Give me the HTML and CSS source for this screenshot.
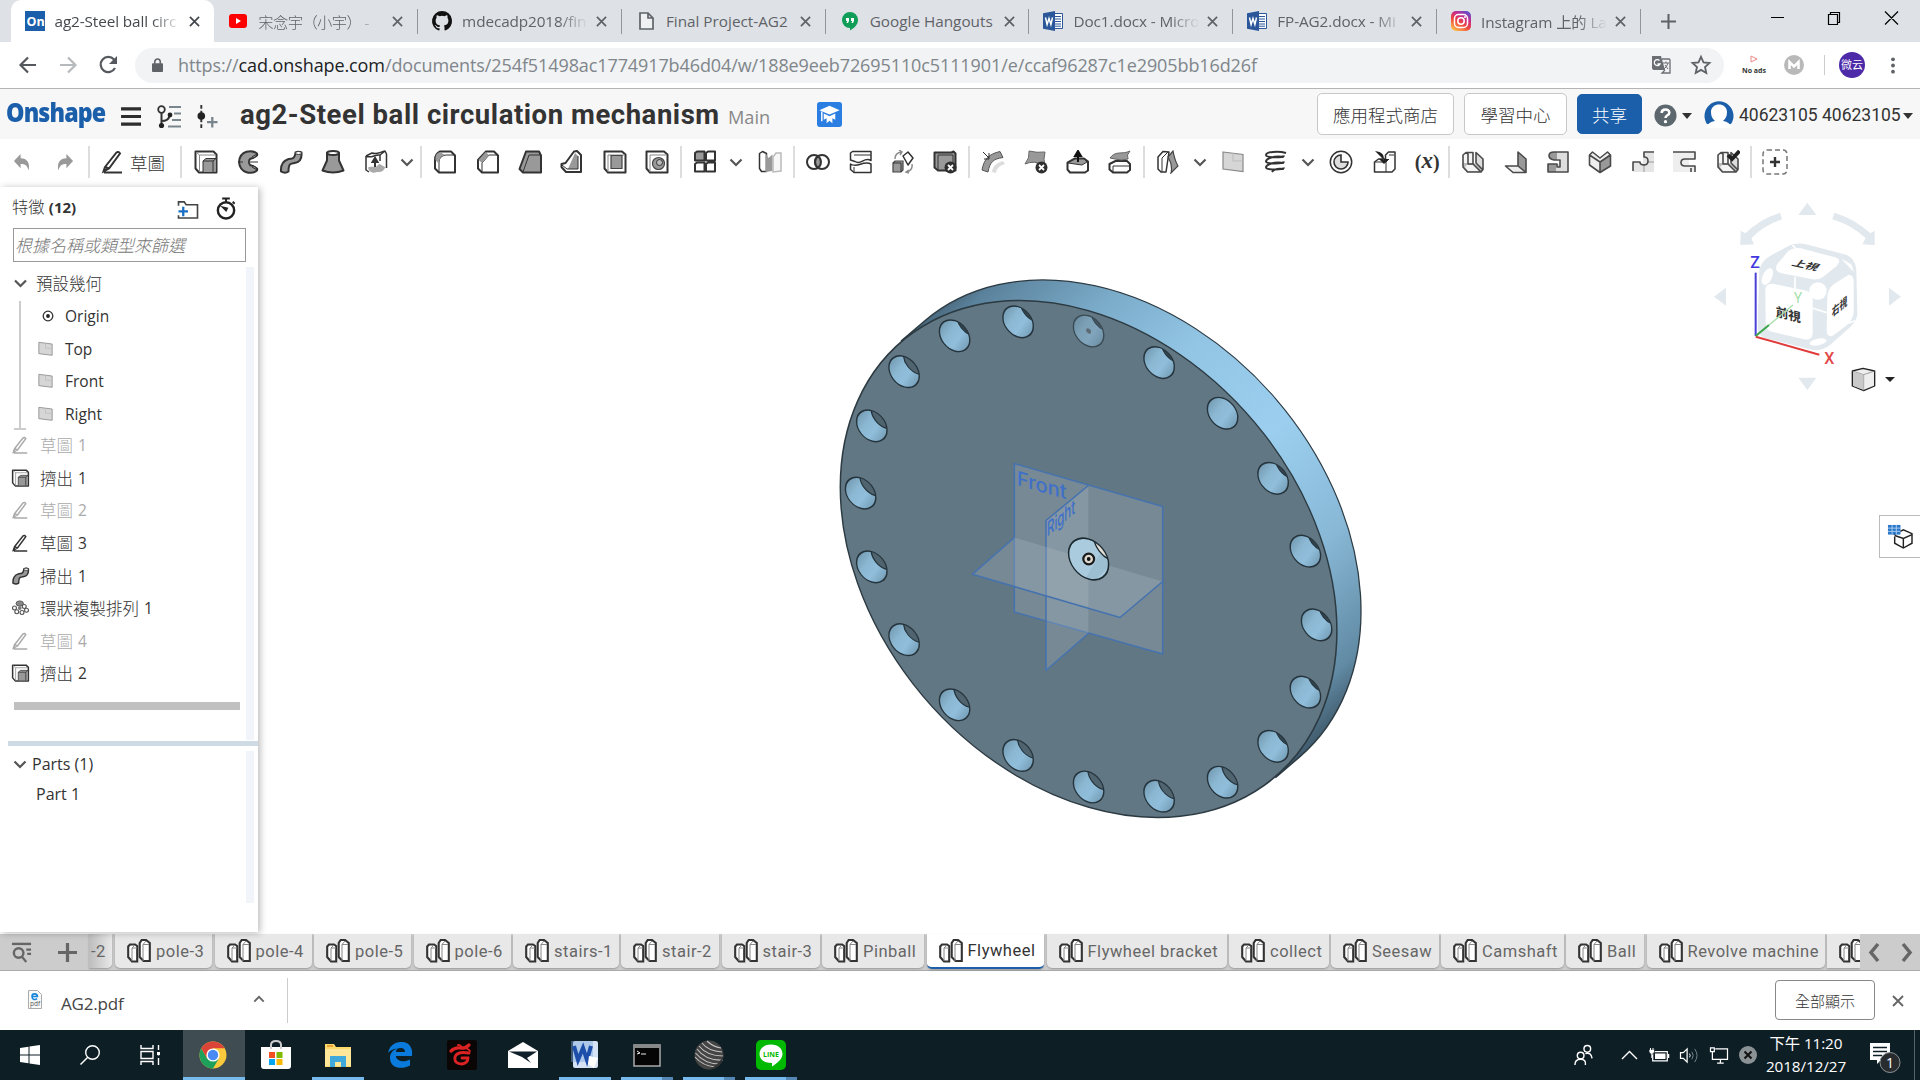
FILE: index.html
```html
<!DOCTYPE html>
<html lang="zh-Hant">
<head>
<meta charset="utf-8">
<title>ag2-Steel ball circulation mechanism</title>
<link rel="stylesheet" href="styles.css">
</head>
<body>
<svg class="defs" aria-hidden="true">
  <defs>
    <symbol id="x" viewBox="0 0 12 12"><path d="M1 1l10 10M11 1L1 11" fill="none" stroke="currentColor" stroke-width="1.900"/></symbol>
    <symbol id="chev" viewBox="0 0 14 9"><path d="M1.500 1.500L7 7l5.500-5.500" fill="none" stroke="currentColor" stroke-width="2.200"/></symbol>
    <symbol id="caret" viewBox="0 0 10 6"><path d="M0 0h10L5 6z" fill="currentColor"/></symbol>
    <symbol id="word" viewBox="0 0 20 20"><path d="M10 2.500h9.500v15H10z" fill="#fff" stroke="#2b579a"/><path d="M12 5.500h6M12 8h6M12 10.500h6M12 13h6M12 15.200h6" stroke="#2b579a"/><path d="M0 2.200L12 0v20L0 17.800z" fill="#2b579a"/><path d="M2.500 6.500l1.600 7 1.900-6 1.900 6 1.600-7" fill="none" stroke="#fff" stroke-width="1.500"/></symbol>
    <symbol id="undo" viewBox="0 0 20 20"><path d="M8 1v4.500c7 0 10 5 8.500 13C15 13 13 11.500 8 11.500V16L1 8.500z" fill="#999"/></symbol>
    <symbol id="pencil" viewBox="0 0 24 24"><path d="M4 17L15.500 2.500q2-1.500 3.500 1L8 18.500 2.500 21.500zM4 17l4 1.500M3 22.500h18" fill="none" stroke="currentColor" stroke-width="2"/></symbol>
    <symbol id="extrude" viewBox="0 0 24 24"><path d="M1.500 1.500h18l3 3v18H5l-3.500-4z" class="wf"/><path d="M5.500 5h16.500M5.500 5v17M2 2l3.500 3" class="thin lt"/><path d="M9 11l3-2.500h10v13H9z" fill="#999"/><path d="M9 22V11h10v11M9 11l3-2.500h10M19 11l3-2.500" class="thin"/></symbol>
    <symbol id="revolve" viewBox="0 0 24 24"><path d="M20 3.500C15-.5 3 0 2 12c1 12 13 12.500 18 8.500q1-3-3-5-5 1-5-3.500t5-3.500q4-2 3-5z" class="gf"/><path d="M12 12l9-6v4zM12 12l9 6v-4z" fill="#fff"/><path d="M20 4l-5 3M20 20l-5-3M2 12h4M12 12h9" class="thin"/></symbol>
    <symbol id="sweep" viewBox="0 0 24 24"><path d="M16.500 2.500q3-1.500 6 0c.5 6-2 10-7 10.500-4 .4-6 .6-6 8.500-2 1.500-5 1.500-7.500 0C1.500 14 5 10.500 9 9.200c5-.7 7-.7 7.500-6.700z" class="gf"/><ellipse cx="19.500" cy="3" rx="3" ry="1.500" fill="#fff" stroke="#333"/></symbol>
    <symbol id="loft" viewBox="0 0 24 24"><path d="M6 3v7.500L1.500 20.500q10.500 4 21 0L18 10.500V3z" class="gf"/><ellipse cx="12" cy="3" rx="6" ry="2" class="wf"/></symbol>
    <symbol id="thicken" viewBox="0 0 24 24"><path d="M3 18c6-3 8 1 11-3 3-3 6 0 8 1-3 7-6 6-9 6-4 2-7 0-10-4z" fill="#aaa"/><path d="M2 6l6-3c5 2 8-1 13-2l1.500 3v14M2 6v14l3 2M2 6c5 3 9-2 14-1v6M16 5l5-4" class="wf1"/><path d="M11 17v-6M8.500 12l2.500-4 2.500 4z" stroke="#333" fill="#333" stroke-width="2"/></symbol>
    <symbol id="fillet" viewBox="0 0 24 24"><path d="M7 1.500h11l4 4v17H6L2 18.500V10q0-6 5-8.500z" class="wf"/><path d="M6 22V12q0-6 7-7h9" class="thin"/><path d="M2.500 10Q2 3 7 2l5 3q-6 1-6 7v2z" fill="#9a9a9a"/></symbol>
    <symbol id="chamfer" viewBox="0 0 24 24"><path d="M10 1.500h8l4 4v17H6L2 18.500V10z" class="wf"/><path d="M6 22V13l7-8h9" class="thin"/><path d="M2.500 10l7-8 3.500 3-7 8z" fill="#9a9a9a"/></symbol>
    <symbol id="draft" viewBox="0 0 24 24"><path d="M8 1.500h13l2 4v17H5L1.500 19z" class="gf"/><path d="M11 5h12M11 5L5 22" class="thin"/></symbol>
    <symbol id="rib" viewBox="0 0 24 24"><path d="M14 1.500l3-.5 4 4v17H6L1.500 17v-3l4-1z" class="wf"/><path d="M15 3l3 3v13H8z" fill="#999"/><path d="M2 15l5 4h11V6" class="thin"/></symbol>
    <symbol id="shell" viewBox="0 0 24 24"><path d="M1.500 1.500H19l3.500 3v18H5l-3.500-4z" class="wf"/><path d="M5 5h17M5 5v17" class="thin lt"/><path d="M8 5.500h11v13H8z" class="gf1"/></symbol>
    <symbol id="hole" viewBox="0 0 24 24"><path d="M1.500 1.500H19l3.500 3v18H5l-3.500-4z" class="wf"/><path d="M5 5h17M5 5v17" class="thin lt"/><circle cx="13.500" cy="13.500" r="6" class="gf1"/><circle cx="14.500" cy="12.500" r="3" fill="#bbb" stroke="#333"/></symbol>
    <symbol id="pattern" viewBox="0 0 24 24"><path d="M2 3l2-1.500h7.500v9H2z" class="gf"/><path d="M13 3l2-1.500h7v9h-9zM2 14l2-1.500h7.500v9H2zM13 14l2-1.500h7v9h-9z" class="wf"/></symbol>
    <symbol id="mirror" viewBox="0 0 24 24"><path d="M1.500 3.500l3-2 4 2v18H3.500l-2-3z" class="wf1"/><path d="M7.500 3l3 5 4-3.500V21l-7 1z" fill="#999"/><path d="M15 22V7l3-4h5v18z" fill="#f7f7f7" stroke="#bbb" stroke-width="1.500"/></symbol>
    <symbol id="bool" viewBox="0 0 24 24"><circle cx="8" cy="12" r="7" class="wf"/><circle cx="16" cy="12" r="7" class="wf"/><path d="M12 6.300a7 7 0 010 11.400 7 7 0 010-11.400z" class="gf"/></symbol>
    <symbol id="split" viewBox="0 0 24 24"><path d="M1.500 10V3l2-1.500H22v9c-7-4-10 5-16 1z" class="wf1"/><path d="M1.500 14c7 5 12-4 20.500 0v8.500H5l-3.500-3z" class="wf1"/><path d="M5 5h17M5 17v5" class="thin"/></symbol>
    <symbol id="transform" viewBox="0 0 24 24"><path d="M2 13l2-2h8v9l-2 2H2z" class="gf1"/><path d="M2 13h8v9" class="thin"/><path d="M12 6l5-4 5 6-5 7z" class="wf1"/><path d="M4 9Q4 3 10 2M8 0l3 2-2 3M21 14q1 6-5 8M18 20l-3 2 3 1" fill="none" stroke="#888" stroke-width="1.400"/></symbol>
    <symbol id="badx" viewBox="0 0 24 24"><circle cx="17.500" cy="17.500" r="6" fill="#2e2e2e"/><path d="M15 15l5 5m0-5l-5 5" stroke="#fff" stroke-width="1.800"/></symbol>
    <symbol id="del" viewBox="0 0 24 24"><path d="M1.500 2.500h17l2-1 2 2v17H5l-3.500-3z" class="gf"/><path d="M5 5h15V21M5 5v15" class="thin"/><use href="#badx"/></symbol>
    <symbol id="modf" viewBox="0 0 24 24"><path d="M1 20C3 9 8 4 19 1.500l3 6C12 9 9 12 7 22z" fill="#999" stroke="#555"/><path d="M11 22c1-7 5-9 11-11l2 3c-6 2-8 4-9 9z" fill="#ddd"/><path d="M2 2l6 6M8 3v6H3" class="thin"/></symbol>
    <symbol id="delf" viewBox="0 0 24 24"><path d="M1 14Q6 8 5 1q8 2 16 1-2 8 0 13Q10 10 1 14z" fill="#999" stroke="#666"/><use href="#badx"/></symbol>
    <symbol id="movef" viewBox="0 0 24 24"><path d="M1.500 12.500l7-4H18l4 3v9l-3 2H4l-2.500-3z" class="wf"/><path d="M2 13l7-4h9l3 3-5 3z" fill="#999" stroke="#333"/><path d="M12 12V3M9 6l3-5 3 5z" stroke="#111" stroke-width="2"/></symbol>
    <symbol id="replf" viewBox="0 0 24 24"><path d="M1.500 14l6-3H19l3 3v6l-3 2.500H5l-3.500-3z" class="wf"/><path d="M5 16h17M5 16v6" class="thin"/><path d="M2 8C8 0 14 5 22 1q-4 4-2 8-7 2-13 0z" fill="#999" stroke="#666"/></symbol>
    <symbol id="offset" viewBox="0 0 24 24"><path d="M2 7l5-5.500 6 .5-3 20H5l-3-3z" class="wf1"/><path d="M6 8l6-6M6 8v14" class="thin"/><path d="M12 7l5-6q2 10 5 15l-7 7q2-8-3-16z" class="gf1"/></symbol>
    <symbol id="plane" viewBox="0 0 24 24"><path d="M2 2l20 2.500v17L2 19z" fill="#d6d6d6" stroke="#888" stroke-width="1.200"/><path d="M12 3v8h10" fill="none" stroke="#bbb"/></symbol>
    <symbol id="helix" viewBox="0 0 24 24"><path d="M22 3C14 .5 2 2 2 5s18 3 18 .5M20 7C10 5 2 9 2 11.500s18 3 18 0M20 13c-10-2-18 2-18 4.500s18 3 18 0M20 19c-6-1-10 0-12 3" fill="none" stroke="#333" stroke-width="2"/></symbol>
    <symbol id="curve" viewBox="0 0 24 24"><circle cx="12" cy="12" r="10.700" class="wf1"/><path d="M12 5v7h7a7 7 0 11-7-7z" fill="#ddd" stroke="#333" stroke-width="1.600"/></symbol>
    <symbol id="derive" viewBox="0 0 24 24"><path d="M1.500 12l4-3h7V5l3-3H22v17l-3 3H1.500z" class="wf1"/><path d="M2 12h11v10M13 12l3-3M16 5h5" class="thin"/><path d="M2 1c7 1 9 3 9 9M6 9l5 5 5-5z" fill="#222"/></symbol>
    <symbol id="sm1" viewBox="0 0 24 24"><path d="M2 5l3-2.500h7V14l8 8H6l-4-5z" fill="#f4f4f4"/><path d="M2 13h11l9 6-2 3H6l-4-5z" fill="#bbb"/><path d="M6 15h7l6 6H7l-3-4z" fill="#f4f4f4"/><path d="M15 2.500l7 6.500V20l-7-7z" fill="#ddd"/><path d="M12 14H7V4L5 2.500 2 5v12l4.500 5H20l2-2.500V9l-7-6.500V13l7 7M5 2.500h7V14l8 8" class="smo"/></symbol>
    <symbol id="sm2" viewBox="0 0 24 24"><path d="M1.500 16H14l8 6.500H9z" fill="#eee"/><path d="M14 2l8 7v13.500L14 16z" fill="#999"/><path d="M14 2l8 7v13.500H9L1.500 16H14zM14 16l8 6.500" class="smo"/></symbol>
    <symbol id="sm3" viewBox="0 0 24 24"><path d="M8 2h14v20H2v-8h12V9H8Q3 9 3 5.500T8 2z" fill="#ddd"/><path d="M16 2H8Q3 2 3 6t5 4h3V2zM2 14h8v8H2z" fill="#999"/><path d="M22 2H8Q3 2 3 5.500T8 10h6v7h-3v-3H2v8h20z" class="smo"/></symbol>
    <symbol id="sm4" viewBox="0 0 24 24"><path d="M1.500 5l3-3L12 8l7.500-6 3 3v12L12 22.500 1.500 15z" fill="#eee"/><path d="M12 12l10-8v12l-10 7z" fill="#999"/><path d="M12 22.500V12L1.500 5v10zM12 12L22.500 5v11L12 22.500M1.500 5l3-3L12 8l7.500-6 3 3" class="smo"/></symbol>
    <symbol id="sm5" viewBox="0 0 24 24"><path d="M12 3h11v19H2v-9h10z" fill="#e5e5e5"/><path d="M13 14v8M17 12h6" stroke="#999"/><path d="M23 2H13v5q4 0 4 4t-4 4-4-3H2v9" class="smo"/></symbol>
    <symbol id="sm6" viewBox="0 0 24 24"><path d="M0 2h22v6h-6v8h5v6H0z" fill="#eee"/><path d="M0 2h22v7H12q-4 0-4 3.500t4 3.500h10v6M18 22v-4" class="smo"/></symbol>
    <symbol id="sm7" viewBox="0 0 24 24"><use href="#sm1"/><path d="M12 5l4 4 7.500-8" fill="none" stroke="#222" stroke-width="3.800"/></symbol>
    <symbol id="plus" viewBox="0 0 26 26"><rect x="1" y="1" width="24" height="24" rx="4" fill="none" stroke="#777" stroke-width="1.500" stroke-dasharray="5 3"/><path d="M13 8v10M8 13h10" stroke="#333" stroke-width="2.400"/></symbol>
    <symbol id="circ" viewBox="0 0 24 24"><ellipse cx="11" cy="6" rx="5" ry="3.500" fill="#888" stroke="#444"/><g fill="#fff" stroke="#555" stroke-width="1.500"><circle cx="4" cy="12" r="2.600"/><circle cx="17" cy="10" r="2.600"/><circle cx="20" cy="15" r="2.600"/><circle cx="7" cy="17" r="2.600"/><circle cx="14" cy="18" r="2.600"/></g><circle cx="11" cy="12" r="2.500" fill="#777"/></symbol>
    <symbol id="part" viewBox="0 0 24 24"><path d="M1.200 7.500L3 5.500h5L10.200 7v15.500H5L1.200 18z" class="pf"/><path d="M5 9l3-3M5 9h5M5 9v13" class="thin lt"/><path d="M12.700 4l2-3H19l3.800 3v18h-6.300l-3.800-4z" class="pf"/><path d="M16 5.500L19 2M16 5.500h6M16 5.500V22" class="thin lt"/></symbol>
    <linearGradient id="rim" gradientUnits="userSpaceOnUse" x1="-187" y1="-178" x2="200" y2="152"><stop offset="0" stop-color="#415b6c"/><stop offset=".05" stop-color="#5b829c"/><stop offset=".2" stop-color="#7bacca"/><stop offset=".35" stop-color="#92c4e4"/><stop offset=".55" stop-color="#9ccfef"/><stop offset=".75" stop-color="#88b8d6"/><stop offset=".93" stop-color="#618aa4"/><stop offset="1" stop-color="#3f596a"/></linearGradient>
    <linearGradient id="bore" x1="0" y1=".2" x2="1" y2=".8"><stop offset="0" stop-color="#7095ac"/><stop offset=".35" stop-color="#8bb7d2"/><stop offset=".62" stop-color="#90bedb"/><stop offset="1" stop-color="#7299b1"/></linearGradient>
    <clipPath id="bc"><circle r="15"/></clipPath>
    <clipPath id="cc"><circle r="20"/></clipPath>
    <g id="h0"><circle r="15.200" fill="url(#bore)" stroke="#25343c" stroke-width="1.400"/></g>
    <g id="ha"><circle r="15.200" fill="url(#bore)"/><g clip-path="url(#bc)"><circle cx="17.500" cy="-20.500" r="15.200" fill="#34444e" stroke="#25343c" stroke-width="1.300"/></g><circle r="15.200" fill="none" stroke="#25343c" stroke-width="1.400"/></g>
    <g id="hb"><circle r="15.200" fill="url(#bore)"/><g clip-path="url(#bc)"><circle cx="14.500" cy="-17" r="15.200" fill="#50646f" stroke="#25343c" stroke-width="1.300"/></g><circle r="15.200" fill="none" stroke="#25343c" stroke-width="1.400"/></g>
  </defs>
</svg>

<header class="tabs">
  <div class="tab on"><svg class="fav" viewBox="0 0 20 20"><path fill="#1b5faa" d="M0 0h20v20H0z"/><text x="1.500" y="14.500" class="onfav">On</text></svg><span>ag2-Steel ball circ</span><svg class="tx"><use href="#x"/></svg></div>
  <div class="tab"><svg class="fav" viewBox="0 0 20 20"><rect x="1" y="3" width="18" height="14" rx="3" fill="#f00"/><path d="M8 7l5 3-5 3z" fill="#fff"/></svg><span class="zh">宋念宇（小宇） -</span><svg class="tx"><use href="#x"/></svg></div>
  <div class="tab"><svg class="fav" viewBox="0 0 16 16"><path fill="#111" d="M8 0a8 8 0 00-2.530 15.590c.4.070.55-.17.55-.38v-1.490c-2.230.48-2.700-.94-2.700-.94-.36-.92-.89-1.170-.89-1.170-.73-.5.060-.49.060-.49.800.06 1.230.83 1.230.83.720 1.220 1.870.87 2.330.66.070-.52.280-.87.510-1.070-1.780-.2-3.640-.89-3.640-3.950 0-.87.310-1.590.82-2.150-.08-.2-.36-1.020.08-2.120 0 0 .67-.21 2.200.82a7.600 7.600 0 014 0c1.530-1.040 2.200-.82 2.200-.82.440 1.100.16 1.920.08 2.120.51.560.82 1.270.82 2.150 0 3.070-1.870 3.750-3.650 3.950.29.250.54.730.54 1.480v2.190c0 .21.150.46.550.38A8 8 0 008 0z"/></svg><span>mdecadp2018/fin</span><svg class="tx"><use href="#x"/></svg></div>
  <div class="tab"><svg class="fav" viewBox="0 0 20 20"><path d="M4 2h8l5 5v11H4zM12 2v5h5" fill="#eef0f2" stroke="#5f6368" stroke-width="1.700"/></svg><span class="full">Final Project-AG2</span><svg class="tx"><use href="#x"/></svg></div>
  <div class="tab"><svg class="fav" viewBox="0 0 20 20"><path d="M10 1a8 8 0 018 8c0 5-4 8-8 10.500V17a8 8 0 010-16z" fill="#0f9d58"/><path d="M6 7h3v3l-1 2H6.500l.7-2H6zM11 7h3v3l-1 2h-1.500l.7-2H11z" fill="#fff"/></svg><span class="full">Google Hangouts</span><svg class="tx"><use href="#x"/></svg></div>
  <div class="tab"><svg class="fav"><use href="#word"/></svg><span>Doc1.docx - Micro</span><svg class="tx"><use href="#x"/></svg></div>
  <div class="tab"><svg class="fav"><use href="#word"/></svg><span>FP-AG2.docx - Mi</span><svg class="tx"><use href="#x"/></svg></div>
  <div class="tab"><svg class="fav" viewBox="0 0 20 20"><linearGradient id="ig" x1=".2" y1="1" x2=".8" y2="0"><stop offset="0" stop-color="#fdc04d"/><stop offset=".4" stop-color="#f0453c"/><stop offset=".7" stop-color="#c72d8d"/><stop offset="1" stop-color="#5b4fcf"/></linearGradient><rect width="20" height="20" rx="5" fill="url(#ig)"/><rect x="3.500" y="3.500" width="13" height="13" rx="4" fill="none" stroke="#fff" stroke-width="1.500"/><circle cx="10" cy="10" r="3.200" fill="none" stroke="#fff" stroke-width="1.500"/><circle cx="14" cy="6" r="1" fill="#fff"/></svg><span>Instagram 上的 La</span><svg class="tx"><use href="#x"/></svg></div>
  <svg class="newtab" viewBox="0 0 16 16"><path d="M8 0v16M0 8h16" stroke="#5f6368" stroke-width="2.200"/></svg>
  <svg class="win" viewBox="0 0 130 16"><path d="M0 7.500h13M57.500 4.500h9v10h-9zM59.500 4.500v-2h9v10h-2M114 1.500l13 13M127 1.500l-13 13" fill="none" stroke="#000" stroke-width="1.200"/></svg>
</header>

<div class="addr">
  <svg class="nav" viewBox="0 0 100 20"><g fill="none" stroke-width="2.200"><path d="M17 10H2M9 2.500L1.500 10 9 17.500" stroke="#55595e"/><path d="M41 10h15M49 2.500l7.500 7.500-7.500 7.500" stroke="#b7babd"/><path d="M96 13a7.600 7.600 0 11-1-8.500" stroke="#55595e"/></g><path d="M98 1v8h-8z" fill="#55595e"/></svg>
  <div class="omni"><svg class="lock" viewBox="0 0 12 15"><path d="M1 5.500h10a1 1 0 011 1V14a1 1 0 01-1 1H1a1 1 0 01-1-1V6.500a1 1 0 011-1z" fill="#5f6368"/><path d="M3 6V4a3 3 0 016 0v2" fill="none" stroke="#5f6368" stroke-width="1.700"/></svg><p class="url">https://<b>cad.onshape.com</b>/documents/254f51498ac1774917b46d04/w/188e9eeb72695110c5111901/e/ccaf96287c1e2905bb16d26f</p>
    <svg class="tr" viewBox="0 0 20 20"><path d="M1 1h9l4 14H3a2 2 0 01-2-2z" fill="#6b6f73"/><path d="M11 4h7a1 1 0 011 1v13H11l3-3" fill="none" stroke="#6b6f73" stroke-width="1.300"/><path d="M8.500 5.500A3 3 0 109 9H6.500" fill="none" stroke="#fff" stroke-width="1.300"/><path d="M12 8h6M15 6.500V8M17 8q-1 4-4 6M14 10l3 4" fill="none" stroke="#6b6f73"/></svg>
    <svg class="star" viewBox="0 0 20 20"><path d="M10 1.800l2.500 5.600 6 .6-4.500 4 1.300 6L10 14.900 4.700 18 6 12 1.500 8l6-.6z" fill="none" stroke="#5f6368" stroke-width="1.800"/></svg>
  </div>
  <div class="noads"><svg viewBox="0 0 8 8"><path d="M1 1l6 3-6 3z" fill="none" stroke="#e88"/></svg>No ads</div>
  <svg class="mm" viewBox="0 0 20 20"><circle cx="10" cy="10" r="10" fill="#b9b9b9"/><path d="M5.500 14V7l4.500 4.500L14.500 7v7" fill="none" stroke="#fff" stroke-width="2.500"/></svg>
  <i class="bar"></i><span class="ava">微云</span>
  <svg class="dots" viewBox="0 0 4 18"><g fill="#5f6368"><circle cx="2" cy="2.500" r="2"/><circle cx="2" cy="9" r="2"/><circle cx="2" cy="15.500" r="2"/></g></svg>
</div>

<div class="head">
  <strong class="logo">Onshape</strong>
  <svg class="burger" viewBox="0 0 22 20"><path d="M0 2h21M0 10h21M0 18h21" stroke="#2d2d2d" stroke-width="3.400"/></svg>
  <svg class="branch" viewBox="0 0 26 24"><circle cx="5.500" cy="4.500" r="3.300" fill="none" stroke="#333" stroke-width="1.800"/><path d="M5.500 8v13M5.500 16q7 0 8-5" fill="none" stroke="#333" stroke-width="2"/><circle cx="14" cy="10" r="2.400" fill="#222"/><circle cx="5.500" cy="20.500" r="2.600" fill="#222"/><path d="M13 2h12M18 8.500h7M16 15h9M12 21.500h13" stroke="#7a868e" stroke-width="2.200"/></svg>
  <svg class="ins" viewBox="0 0 22 24"><path d="M4.500 0v4M4.500 6v3M4.500 14v4M4.500 20v4" stroke="#333" stroke-width="2"/><circle cx="4.500" cy="11.500" r="4" fill="#222"/><path d="M16 12.500v11M10.500 18h11" stroke="#7a868e" stroke-width="2.400"/></svg>
  <h1>ag2-Steel ball circulation mechanism</h1><span class="main">Main</span>
  <svg class="cap" viewBox="0 0 26 26"><rect width="26" height="26" rx="3" fill="#2a7de1"/><path d="M13 4l10.500 4.500L13 13 2.500 8.500z" fill="#fff"/><path d="M7 12l6 2.700 6-2.700v6.500L16 17v5l-3-2.500-3 2.500v-5l-3 1.500z" fill="#fff"/><path d="M5 10v10" stroke="#fff" stroke-width="1.500"/></svg>
  <div class="right">
    <button class="b1">應用程式商店</button><button class="b2">學習中心</button><button class="b3">共享</button>
    <svg class="help" viewBox="0 0 24 24"><circle cx="12" cy="12" r="11.500" fill="#5c676e"/><path d="M8 9.500c0-5 8-5 8-.5 0 3-4 2.500-4 5.500" fill="none" stroke="#fff" stroke-width="2.700"/><circle cx="12" cy="18.500" r="1.700" fill="#fff"/></svg><svg class="car c1"><use href="#caret"/></svg>
    <svg class="user" viewBox="0 0 30 30"><path d="M3 24A14.500 14.500 0 1127 24" fill="#1b5faa"/><path d="M2 28q2-6 9-7-4-3-4-9c0-10 16-10 16 0q0 6-4 9 7 1 9 7z" fill="#fff"/></svg>
    <span class="uid">40623105 40623105</span><svg class="car"><use href="#caret"/></svg>
  </div>
</div>

<nav class="tools">
  <div class="grp"><i><svg class="s20"><use href="#undo"/></svg></i><i><svg class="s20 flip"><use href="#undo"/></svg></i></div>
  <div class="grp sk"><svg class="pen"><use href="#pencil"/></svg>草圖</div>
  <div class="grp"><i><svg><use href="#extrude"/></svg></i><i><svg><use href="#revolve"/></svg></i><i><svg><use href="#sweep"/></svg></i><i><svg><use href="#loft"/></svg></i><i><svg><use href="#thicken"/></svg></i><u><svg><use href="#chev"/></svg></u></div>
  <div class="grp"><i><svg><use href="#fillet"/></svg></i><i><svg><use href="#chamfer"/></svg></i><i><svg><use href="#draft"/></svg></i><i><svg><use href="#rib"/></svg></i><i><svg><use href="#shell"/></svg></i><i><svg><use href="#hole"/></svg></i></div>
  <div class="grp"><i><svg><use href="#pattern"/></svg></i><u><svg><use href="#chev"/></svg></u><i><svg><use href="#mirror"/></svg></i></div>
  <div class="grp"><i><svg><use href="#bool"/></svg></i><i><svg><use href="#split"/></svg></i><i><svg><use href="#transform"/></svg></i><i><svg><use href="#del"/></svg></i></div>
  <div class="grp"><i><svg><use href="#modf"/></svg></i><i><svg><use href="#delf"/></svg></i><i><svg><use href="#movef"/></svg></i><i><svg><use href="#replf"/></svg></i></div>
  <div class="grp"><i><svg><use href="#offset"/></svg></i><u><svg><use href="#chev"/></svg></u><i><svg><use href="#plane"/></svg></i><i><svg><use href="#helix"/></svg></i><u><svg><use href="#chev"/></svg></u><i><svg><use href="#curve"/></svg></i><i><svg><use href="#derive"/></svg></i><i class="vx">(<em>x</em>)</i></div>
  <div class="grp"><i><svg><use href="#sm1"/></svg></i><i><svg><use href="#sm2"/></svg></i><i><svg><use href="#sm3"/></svg></i><i><svg><use href="#sm4"/></svg></i><i><svg><use href="#sm5"/></svg></i><i><svg><use href="#sm6"/></svg></i><i><svg><use href="#sm7"/></svg></i></div>
  <div class="grp"><i><svg class="s26"><use href="#plus"/></svg></i></div>
</nav>

<main class="work">
  <aside class="panel">
    <div class="feat">
      <div class="ph"><span>特徵 <b>(12)</b></span>
        <svg class="fold" viewBox="0 0 24 20"><path d="M2 6V2h6l2 3h12v14H2v-3" fill="none" stroke="#444" stroke-width="1.700"/><path d="M7 7v10M2 12h10" stroke="#1b6fc2" stroke-width="2.400"/></svg>
        <svg class="watch" viewBox="0 0 22 24"><circle cx="11" cy="14" r="8.500" fill="none" stroke="#222" stroke-width="2.500"/><path d="M7 1.500h8M11 2v4M18 5l2 2M11 14l-3-3 4 1z" stroke="#222" stroke-width="2"/></svg></div>
      <div class="search">根據名稱或類型來篩選</div>
      <div class="list">
        <div class="row top"><svg class="ch"><use href="#chev"/></svg><span>預設幾何</span></div>
        <div class="sub">
          <div class="row"><svg class="org" viewBox="0 0 12 12"><circle cx="6" cy="6" r="4.800" fill="none" stroke="#333" stroke-width="1.300"/><circle cx="6" cy="6" r="1.900" fill="#222"/></svg>Origin</div>
          <div class="row"><svg><use href="#plane"/></svg>Top</div>
          <div class="row"><svg><use href="#plane"/></svg>Front</div>
          <div class="row"><svg><use href="#plane"/></svg>Right</div>
        </div>
        <div class="row off"><svg><use href="#pencil"/></svg><span>草圖</span>1</div>
        <div class="row"><svg><use href="#extrude"/></svg><span>擠出</span>1</div>
        <div class="row off"><svg><use href="#pencil"/></svg><span>草圖</span>2</div>
        <div class="row"><svg><use href="#pencil"/></svg><span>草圖</span>3</div>
        <div class="row"><svg><use href="#sweep"/></svg><span>掃出</span>1</div>
        <div class="row"><svg><use href="#circ"/></svg><span>環狀複製排列</span>1</div>
        <div class="row off"><svg><use href="#pencil"/></svg><span>草圖</span>4</div>
        <div class="row"><svg><use href="#extrude"/></svg><span>擠出</span>2</div>
        <div class="roll"></div>
      </div>
    </div>
    <div class="splitter"></div>
    <div class="parts"><div class="row pr"><svg class="ch"><use href="#chev"/></svg>Parts (1)</div><div class="pt">Part 1</div></div>
  </aside>
  <section class="stage">
    <svg class="scene" viewBox="258 187 1662 747">
      <g transform="matrix(1 .289 0 1 1088.600 559)">
        <path d="M-187.200-164.100L-163.700-190.900A248.700 248.700 0 01210.700 137.300L187.200 164.100z" fill="url(#rim)" stroke="#2c3a42" stroke-width="1.300"/>
        <circle r="248.300" fill="#627784" stroke="#2c3a42" stroke-width="1.500"/>
        <g opacity=".65"><use href="#ha" x="0" y="-228"/></g><circle cy="-228" r="2.500" fill="#5d6b74"/>
        <use href="#ha" x="70.500" y="-216.800"/><use href="#h0" x="134" y="-184.500"/><use href="#ha" x="184.500" y="-134"/><use href="#ha" x="216.800" y="-70.500"/><use href="#ha" x="228" y="0"/><use href="#ha" x="216.800" y="70.500"/><use href="#ha" x="184.500" y="134"/><use href="#hb" x="134" y="184.500"/><use href="#hb" x="70.500" y="216.800"/><use href="#hb" x="0" y="228"/><use href="#hb" x="-70.500" y="216.800"/><use href="#hb" x="-134" y="184.500"/><use href="#hb" x="-184.500" y="134"/><use href="#hb" x="-216.800" y="70.500"/><use href="#hb" x="-228" y="0"/><use href="#hb" x="-216.800" y="-70.500"/><use href="#hb" x="-184.500" y="-134"/><use href="#ha" x="-134" y="-184.500"/><use href="#ha" x="-70.500" y="-216.800"/>
      </g>
      <g fill="#b8c6cc" fill-opacity=".24" stroke="#4673ae" stroke-width="1.600" stroke-linejoin="round">
        <path d="M1014.300 463.500L1162.700 506.500V654L1014.300 612z"/>
        <path d="M1088.400 485.500L1046 520.500V670.500L1088.400 633.500z" stroke="none"/><path d="M1088.400 485.500L1046 520.500V670.500L1088.400 633.500" fill="none"/>
        <path d="M1014.300 537.500L972.300 574.300L1120 617.500L1162.700 581.500z" stroke="none"/><path d="M1014.300 537.500L972.300 574.300L1120 617.500L1162.700 581.500" fill="none"/>
      </g>
      <text class="pl" transform="matrix(1 .289 0 1 1017 485)">Front</text>
      <text class="pl" transform="matrix(.57 -.49 0 1 1047 537)">Right</text>
      <g transform="matrix(1 .289 0 1 1088.600 559)"><circle r="20" fill="#aacbdd"/><path d="M14-14L-3 20 8 18 20 2z" fill="#9dbfd2"/><g clip-path="url(#cc)"><circle cx="25" cy="-25" r="20" fill="#e3ded6" stroke="#1b2930" stroke-width="1.500"/></g><circle r="20" fill="none" stroke="#1b2930" stroke-width="1.500"/></g>
      <circle cx="1088.700" cy="559" r="5.400" fill="#ddd8cf" stroke="#191919" stroke-width="2.200"/><circle cx="1088.700" cy="559" r="1.900" fill="#111"/>

      <g transform="translate(1680 180) scale(.33333)">
        <g fill="#e1e8ee"><path d="M382 68l27 37h-54zM382 630l27-37h-54zM102 350l36-27v54zM663 350l-36-27v54z"/>
          <path d="M300 98l6 20q-55 18-92 57l8 18-41 2 1-43 14 8q42-42 104-62zM463 98l-6 20q60 18 100 57l-10 18 37 2V152l-13 8q-44-42-108-62z"/>
          <path d="M238 268Q246 242 270 228L325 198Q345 188 375 192L490 222Q525 230 529 270L532 400Q531 420 515 437L450 495Q425 515 395 509L255 474Q232 466 233 440z"/></g>
        <g fill="#fff"><path d="M325 213Q340 202 362 205L465 232Q488 240 470 258L430 290Q418 300 398 298L305 280Q280 272 292 252z"/><path d="M256 330Q257 308 282 312L380 332Q398 337 398 357V458Q397 483 372 478L275 455Q257 450 257 430z"/><path d="M442 350Q444 326 462 312L505 285Q522 282 521 310V400Q518 420 502 434L462 465Q441 477 440 450z"/><circle cx="414" cy="333" r="26"/><ellipse cx="262" cy="290" rx="14" ry="27" transform="rotate(25 262 290)"/><ellipse cx="414" cy="486" rx="26" ry="10" transform="rotate(-12 414 486)"/><path d="M482 235l40 42-8-24zM335 196l12 15 4-3-10-14z"/></g>
        <path d="M345 290v38M396 384l44 14M505 430l20-8" stroke="#fff" stroke-width="5"/>
        <g class="face"><text transform="matrix(1 .22 -.5 .62 333 256)">上視</text><text transform="matrix(1 .25 0 1 287 408)">前視</text><text transform="matrix(.62 -.5 0 .95 455 412)">右視</text></g>
        <path d="M227 468V278" stroke="#4a40d8" stroke-width="6"/><path d="M227 470l191 54" stroke="#e03a3a" stroke-width="6"/><path d="M227 468l40-33" stroke="#3aa64a" stroke-width="6"/><path d="M267 435l72-60" stroke="#a5dfa9" stroke-width="4"/>
        <g class="ax"><text x="211" y="264" fill="#4338e0">Z</text><text x="433" y="552" fill="#e24848">X</text><text x="341" y="368" fill="#a5dfa9" class="ay">Y</text></g>
        <g stroke="#222" stroke-width="4" stroke-linejoin="round"><path d="M517 573l32-8 35 8v45l-33 14-34-14z" fill="#eee"/><path d="M517 573l34 11 33-11M551 584v48" fill="none" stroke-width="2" stroke="#777"/></g><path d="M519 575l31 10v44l-31-12z" fill="#c9c9c9"/><path d="M615 591h30l-15 15z" fill="#222"/>
      </g>
    </svg>
    <button class="side"><svg viewBox="0 0 26 26"><path d="M7 11l10-5 9 4v10l-9 5-9-5V13" fill="#fff" stroke="#222" stroke-width="1.500"/><path d="M8 12l9 3 9-4M17 15v10" fill="none" stroke="#222" stroke-width="1.500"/><path d="M1 1h13v10H1z" fill="#2a77c9"/><path d="M1 4.300h13M1 7.700h13M5.300 1v10M9.700 1v10" stroke="#a9cdf0"/></svg></button>
  </section>
</main>

<div class="dtabs">
  <div class="lead"><svg class="find" viewBox="0 0 22 22"><path d="M1 2h20" stroke="#666" stroke-width="2.500"/><circle cx="8" cy="11.500" r="5" fill="none" stroke="#666" stroke-width="2.500"/><path d="M11.500 15.500L16 21M16 8h5M17 12.500h4" stroke="#666" stroke-width="2.300"/></svg><svg class="add" viewBox="0 0 20 20"><path d="M10 0v20M0 10h20" stroke="#666" stroke-width="3.400"/></svg></div>
  <div class="dt t0">-2</div>
  <div class="dt"><svg><use href="#part"/></svg>pole-3</div>
  <div class="dt"><svg><use href="#part"/></svg>pole-4</div>
  <div class="dt"><svg><use href="#part"/></svg>pole-5</div>
  <div class="dt"><svg><use href="#part"/></svg>pole-6</div>
  <div class="dt w106"><svg><use href="#part"/></svg>stairs-1</div>
  <div class="dt w98"><svg><use href="#part"/></svg>stair-2</div>
  <div class="dt w98"><svg><use href="#part"/></svg>stair-3</div>
  <div class="dt w102"><svg><use href="#part"/></svg>Pinball</div>
  <div class="dt w118 cur"><svg><use href="#part"/></svg>Flywheel</div>
  <div class="dt w180"><svg><use href="#part"/></svg>Flywheel bracket</div>
  <div class="dt w100"><svg><use href="#part"/></svg>collect</div>
  <div class="dt w108"><svg><use href="#part"/></svg>Seesaw</div>
  <div class="dt w122"><svg><use href="#part"/></svg>Camshaft</div>
  <div class="dt w78"><svg><use href="#part"/></svg>Ball</div>
  <div class="dt w178"><svg><use href="#part"/></svg>Revolve machine</div>
  <div class="dt last"><svg><use href="#part"/></svg></div>
  <div class="tail"><svg viewBox="0 0 60 36"><path d="M18 10l-7 8.500 7 8.500M43 10l7 8.500-7 8.500" fill="none" stroke="#666" stroke-width="3.500"/></svg></div>
</div>

<div class="dl">
  <svg class="pdf" viewBox="0 0 14 19"><path d="M.5.500h9l4 4v14H.500z" fill="#fafafa" stroke="#aaa"/><path d="M4 6.500h5.500C9 3 4 3 4 6.500s3.500 3.500 5 2.200" fill="none" stroke="#1a86d9" stroke-width="1.600"/><text x="2" y="15.500" class="pt4">pdf</text></svg>
  <span>AG2.pdf</span><svg class="up"><use href="#chev"/></svg><i></i>
  <button>全部顯示</button><svg class="cl"><use href="#x"/></svg>
</div>

<footer class="task">
  <div class="ti w60"><svg viewBox="0 0 20 20"><path d="M0 3l8.500-1.200V9.500H0zM9.500 1.600L20 0v9.500H9.500zM0 10.500h8.500v7.700L0 17zM9.500 10.500H20V20L9.500 18.400z" fill="#fff"/></svg></div>
  <div class="ti w60"><svg viewBox="0 0 20 20"><circle cx="12.500" cy="7.500" r="6.800" fill="none" stroke="#fff" stroke-width="1.400"/><path d="M7.500 12.500L.500 19.500" stroke="#fff" stroke-width="1.400"/></svg></div>
  <div class="ti w64"><svg viewBox="0 0 20 20"><path d="M1 0v3.500h12V0M1 20v-3.500h12V20M1 6.500h12v7H1zM18.500 0v5M18.500 7v3.500M18.500 13v7" fill="none" stroke="#fff" stroke-width="1.400"/><path d="M17 7h3v3h-3z" fill="#fff"/></svg></div>
  <div class="ti act"><svg class="s28" viewBox="0 0 28 28"><circle cx="14" cy="14" r="13.500" fill="#fbc93c"/><path d="M2.310 7.250A13.500 13.500 0 0014 27.500L19.850 17.380 8.150 17.380z" fill="#1da05a"/><path d="M2.310 7.250A13.500 13.500 0 0125.690 7.250H14L8.150 17.380z" fill="#db4437"/><circle cx="14" cy="14" r="6.600" fill="#fff"/><circle cx="14" cy="14" r="5.200" fill="#4a8af4"/></svg></div>
  <div class="ti"><svg class="s30" viewBox="0 0 30 30"><path d="M0 7h30v19q0 3-3 3H3q-3 0-3-3z" fill="#fff"/><path d="M10 9V5q0-4 5-4t5 4v4" fill="none" stroke="#ccc" stroke-width="2"/><path d="M8 12h6v6H8z" fill="#f25022"/><path d="M15.500 12h6v6h-6z" fill="#7fba00"/><path d="M8 19h6v6H8z" fill="#00a4ef"/><path d="M15.500 19h6v6h-6z" fill="#ffb900"/></svg></div>
  <div class="ti run"><svg class="s28" viewBox="0 0 28 28"><path d="M1 3h9l2 3h15v20H1z" fill="#ffd96a"/><path d="M1 8h26v17H1z" fill="#ffe79a"/><path d="M3 4h6v2H3z" fill="#e8a33d"/><path d="M6 15h16v11h-5v-5h-6v5H6z" fill="#3fa9dc"/></svg></div>
  <div class="ti"><svg class="s28" viewBox="0 0 28 28"><path d="M2 12C4 2 12 1 16 1c8 0 11 7 10 14H10c0 5 8 7 14 3.500v6C15 29 4 27 4 17c0-5 3-8 7-9.500Q5 8 2 12zM10 11h9q0-4-4.500-4T10 11z" fill="#0a7bdc"/></svg></div>
  <div class="ti"><svg class="s30" viewBox="0 0 30 30"><rect width="30" height="30" rx="2" fill="#0a0606"/><g fill="none" stroke="#dc2222" stroke-linecap="round"><path d="M4 11q4-4 9-3t9-3" stroke-width="3.200"/><path d="M11 5q3 0 4 3 5-1 8 3" stroke-width="1.800"/><path d="M22 13q-12-2-14 4-1 7 7 7 6-1 6-6h-6" stroke-width="2.800"/></g></svg></div>
  <div class="ti"><svg class="s30" viewBox="0 0 30 30"><path d="M0 11L15 2l15 9v17H0z" fill="#fff"/><path d="M1 11.500h28L19 18l4 5-9-6z" fill="#10202a"/></svg></div>
  <div class="ti run"><svg class="s28" viewBox="0 0 28 28"><rect x="2" y="0" width="25" height="27" rx="2" fill="#d6e3f5"/><path d="M0 0h22v21H0z" fill="#7ea6dc" opacity=".45"/><path d="M3 5l4 14 5-12 4 12 4-14" fill="none" stroke="#1d4faa" stroke-width="4"/><path d="M18 15l9 2-4 10-6-4z" fill="#fff"/></svg></div>
  <div class="ti run two"><svg class="s28" viewBox="0 0 28 28"><path d="M1 4h26v21H1z" fill="#050505" stroke="#aaa" stroke-width="1.500"/><path d="M1 4h26v3H1z" fill="#888"/><path d="M4 10l3 2-3 1M8 13h5" fill="none" stroke="#eee"/></svg></div>
  <div class="ti run two"><svg class="s30" viewBox="0 0 30 30"><circle cx="15" cy="15" r="14.500" fill="#444"/><g fill="none" stroke="#c4c4c4" stroke-width="1.100"><path d="M8 3q6 8 20 9M5 6q8 10 24 10M3 9q9 12 26 11M1.500 13q9 11 24 11M1 17q8 9 20 10M13 1q6 6 14 7"/></g><path d="M15 29.500A14.500 14.500 0 0029.500 15Q26 24 15 29.500z" fill="#333"/></svg></div>
  <div class="ti run two"><svg class="s30" viewBox="0 0 30 30"><rect width="30" height="30" rx="5" fill="#00b900"/><path d="M15 4.500c7 0 11.500 4 11.500 9.500 0 5-5 9-10.500 12.500v-3.500C8 23 3.500 19.500 3.500 14S8 4.500 15 4.500z" fill="#fff"/><text x="7" y="16.500" class="ln">LINE</text></svg></div>
  <div class="tray">
    <svg class="ppl" viewBox="0 0 20 22"><g fill="none" stroke="#fff" stroke-width="1.500"><circle cx="7" cy="11" r="3.500"/><path d="M1 21q0-6 6-6t5 6"/><circle cx="14" cy="4" r="3.500"/><path d="M12 9q6-2 7 5"/></g></svg>
    <svg class="tup" viewBox="0 0 17 10"><path d="M1 1l7.500 7.500L16 1" fill="none" stroke="#fff" stroke-width="1.400"/></svg>
    <svg class="bat" viewBox="0 0 20 14"><path d="M3.700 3.700H18.300v9.100H3.700z" fill="none" stroke="#fff" stroke-width="1.200"/><path d="M6 5.500h10.500V11H6z" fill="#fff"/><path d="M19.500 6v4" stroke="#fff" stroke-width="1.500"/><path d="M0 1.500h5.500V4L4 6H1.500L0 4z" fill="#fff" stroke="#0e1e25" stroke-width=".7"/><path d="M1.500 0v2M4 0v2M2.800 5v5" stroke="#fff"/></svg>
    <svg class="vol" viewBox="0 0 20 18"><path d="M1 6h3l4-4v14l-4-4H1z" fill="none" stroke="#fff" stroke-width="1.300"/><path d="M10.500 7q1.500 2 0 4" fill="none" stroke="#fff"/><path d="M13 5q3 4 0 8M16 2q5 7 0 14" fill="none" stroke="#788"/></svg>
    <svg class="mon" viewBox="0 0 20 18"><path d="M6 2h13v11H3V8M8 17h7M11.500 13v4M1 1h4v4H1zM3 5v3" fill="none" stroke="#fff" stroke-width="1.300"/></svg>
    <svg class="xc" viewBox="0 0 18 18"><circle cx="9" cy="9" r="9" fill="#8b9296"/><path d="M5.500 5.500l7 7M12.500 5.500l-7 7" stroke="#111" stroke-width="2"/></svg>
    <div class="clock"><span>下午 11:20</span><span>2018/12/27</span></div>
    <svg class="note" viewBox="0 0 32 32"><path d="M1 1h20v17h-9l-4 4v-4H1z" fill="#fff"/><path d="M4 5.500h14M4 9.500h14M4 13.500h9" stroke="#0e1e25" stroke-width="1.500"/><circle cx="21" cy="20.500" r="10" fill="#282c2f" stroke="#8b9296"/><text x="17" y="26" class="nb">1</text></svg>
    <i></i>
  </div>
</footer>
</body>
</html>
```
FILE: styles.css
```css
* { box-sizing: border-box; }
body { margin: 0; width: 1920px; height: 1080px; overflow: hidden; background: #fff; color: #333; display: flex; flex-direction: column; font: 15px "Open Sans", "Noto Sans CJK TC", sans-serif; }
svg { display: block; flex: none; overflow: visible; }
i, em { font-style: normal; }
p, h1 { margin: 0; }
button { font: inherit; padding: 0; }
.defs { position: absolute; width: 0; height: 0; }
.wf { fill: #fff; stroke: #333; stroke-width: 2; stroke-linejoin: round; }
.wf1 { fill: #fff; stroke: #333; stroke-width: 1.500; stroke-linejoin: round; }
.pf { fill: #fff; stroke: #333; stroke-width: 2.100; }
.gf { fill: #999; stroke: #333; stroke-width: 2; stroke-linejoin: round; }
.gf1 { fill: #999; stroke: #444; stroke-width: 1.200; }
.thin { fill: none; stroke: #333; stroke-width: 1; }
.lt { stroke: #888; }
.smo { fill: none; stroke: #4a4a4a; stroke-width: 1.600; stroke-linejoin: round; }

/* browser tabs */
.tabs { height: 42px; flex: none; background: #dee1e6; display: flex; align-items: center; padding-left: 10.500px; color: #5f6368; font-size: 15.300px; }
.tab { width: 203.800px; height: 42px; flex: none; display: flex; align-items: center; padding-left: 14px; position: relative; }
.tab:not(.on)::after { content: ""; position: absolute; right: 0; top: 9px; height: 25px; width: 1px; background: #92969c; }
.tab.on { background: #fff; border-radius: 10px 10px 0 0; color: #45494d; }
.tab span { width: 129px; margin-left: 10px; white-space: nowrap; letter-spacing: -.1px; -webkit-mask-image: linear-gradient(90deg, #000 75%, transparent 98%); mask-image: linear-gradient(90deg, #000 75%, transparent 98%); }
.tab span.full { -webkit-mask-image: none; mask-image: none; letter-spacing: 0; }
.tab span.zh { font-weight: 300; letter-spacing: -.6px; }
.fav { width: 20px; height: 20px; }
.onfav { font: 700 12.5px "Open Sans", sans-serif; fill: #fff; }
.tx { width: 11px; height: 11px; margin-left: 5px; }
.newtab { width: 15px; height: 15px; margin-left: 20px; }
.win { width: 130px; height: 16px; margin: -6px 0 0 95px; }

/* address row */
.addr { height: 47px; flex: none; border-bottom: 1px solid #b4b4b4; display: flex; align-items: center; padding-left: 19px; }
.nav { width: 100px; height: 20px; }
.omni { width: 1589px; height: 35px; margin-left: 16px; border-radius: 18px; background: #f1f3f4; display: flex; align-items: center; padding-left: 17px; }
.lock { width: 11px; height: 14px; }
.url { width: 1473px; margin-left: 15px; margin-top: -1px; font-size: 18px; letter-spacing: -.1px; color: #80868b; white-space: nowrap; }
.url b { font-weight: 400; color: #202124; }
.tr { width: 20px; height: 20px; margin-left: 0; }
.star { width: 20px; height: 20px; margin-left: 20px; }
.noads { width: 30px; margin-left: 15px; text-align: center; font: 700 7px "Open Sans", sans-serif; }
.noads svg { width: 8px; height: 8px; margin: 0 auto 3px; }
.mm { width: 20px; height: 20px; margin-left: 15px; }
.bar { width: 1px; height: 20px; background: #ccc; margin-left: 20px; }
.ava { width: 26px; height: 26px; border-radius: 50%; background: #4c2aa8; color: #fff; font-size: 11px; line-height: 25px; text-align: center; margin-left: 14px; }
.dots { width: 4px; height: 17px; margin-left: 26px; }

/* document header */
.head { height: 50px; flex: none; background: #f7f7f7; display: flex; align-items: center; }
.logo { width: 114px; margin-left: 6px; font: 800 27px/40px "Open Sans", sans-serif; color: #1b5faa; letter-spacing: -1px; transform: scaleX(.86); transform-origin: 0 0; margin-top: -4px; }
.burger { width: 21px; height: 19px; margin-left: 1px; margin-top: 4px; }
.branch { width: 26px; height: 24px; margin: 5px 0 0 14px; }
.ins { width: 21px; height: 23px; margin: 5px 0 0 15px; }
.head h1 { width: 482px; margin: 2px 0 0 22px; font: 700 27.500px/36px Roboto, sans-serif; white-space: nowrap; letter-spacing: .55px; }
.main { width: 90px; margin: 5px 0 0 6px; font-size: 18.200px; color: #888; }
.cap { width: 25px; height: 25px; margin-left: -1px; }
.right { margin-left: auto; display: flex; align-items: center; }
.right button { height: 42px; border: 1px solid #c8c8c8; border-radius: 5px; background: #fff; font-size: 17.500px; font-weight: 300; color: #333; margin-right: 10px; }
.right .b1 { width: 137px; }
.right .b2 { width: 103px; }
.right .b3 { width: 65px; height: 40px; background: #1b5faa; border-color: #1b5faa; color: #fff; margin-right: 12px; }
.help { width: 23px; height: 23px; margin-top: 3px; }
.car { width: 10px; height: 6px; margin: 4px 7px 0 0; }
.c1 { margin: 3px 12px 0 5px; }
.user { width: 30px; height: 30px; margin-top: 2px; }
.uid { width: 160px; margin: 2px 4px 0 5px; font: 17.500px Roboto, sans-serif; white-space: nowrap; }

/* modelling tools */
.tools { height: 48px; flex: none; display: flex; align-items: center; padding: 0 0 2px; }
.grp { height: 32px; display: flex; align-items: center; border-right: 2px solid #ddd; padding-left: 2px; flex: none; }
.grp i { width: 42.400px; display: flex; justify-content: center; flex: none; }
.grp u { width: 20px; display: flex; justify-content: center; flex: none; text-decoration: none; color: #555; }
.grp svg { width: 24px; height: 24px; }
.grp u svg { width: 14px; height: 9px; }
.grp .s20 { width: 19px; height: 19px; }
.grp .s26 { width: 26px; height: 26px; }
.flip { transform: scaleX(-1); }
.grp:nth-child(1) { width: 90px; padding-left: 1px; }
.grp.sk { width: 92px; padding-left: 11px; font-size: 17.500px; font-weight: 300; }
.pen { margin-right: 5px; }
.grp:nth-child(3) { width: 240px; padding-left: 3px; }
.grp:nth-child(4) { width: 260px; }
.grp:nth-child(5) { width: 113px; }
.grp:nth-child(5) i:last-child { margin-left: 2px; }
.grp:nth-child(6), .grp:nth-child(7) { width: 175px; }
.grp:nth-child(8) { width: 305px; }
.grp:nth-child(8) u { width: 21px; margin-right: 1px; }
.grp:nth-child(8) u + i + i { margin-left: 1px; }
.grp:nth-child(8) u + i:nth-of-type(4) { margin-left: 1px; }
.grp:nth-child(9) { width: 302px; }
.grp:nth-child(10) { border: 0; }
.vx { font: 700 20px "Liberation Serif", serif; }
.vx em { font-style: italic; font-size: 23px; line-height: 20px; }

/* feature panel */
.work { height: 747px; flex: none; display: flex; }
.panel { width: 258px; height: 745px; background: #fff; box-shadow: 2px 1px 7px rgba(0,0,0,.28); position: relative; flex: none; }
.feat { height: 554px; }
.ph { height: 41px; display: flex; align-items: center; padding-left: 12px; font-weight: 300; font-size: 16.300px; }
.ph span { width: 164px; margin-top: -4px; }
.ph b { font-size: 15px; font-weight: 700; }
.fold { width: 24px; height: 19px; margin-top: 4px; }
.watch { width: 22px; height: 23px; margin-left: 15px; margin-top: 2px; }
.search { width: 233px; height: 34px; margin-left: 13px; border: 1px solid #999; padding-left: 1px; font-size: 17px; line-height: 34px; font-style: italic; font-weight: 300; color: #777; }
.list { height: 473px; border-right: 8px solid #f1f5f9; width: 254px; margin-top: 5px; }
.row { height: 32.600px; display: flex; align-items: center; padding: 0 0 2px 11px; font-size: 15.500px; }
.row span { font-weight: 300; font-size: 16.500px; margin-right: 5px; }
.row svg { width: 19px; height: 18px; margin-right: 10px; }
.row .ch { width: 15px; height: 9px; margin-right: 8px; color: #555; }
.row.top { height: 34px; padding-left: 13px; }
.row.off { color: #aaa; }
.sub { margin-left: 19px; border-left: 2px solid #ccc; position: relative; height: 129px; }
.sub::after { content: ""; position: absolute; left: -7px; bottom: 0; width: 12px; height: 2px; background: #ccc; }
.sub .row { padding-left: 16px; }
.sub .row svg { width: 17px; height: 16px; margin-right: 11px; }
.sub .row .org { width: 12px; height: 12px; margin: 0 11px 0 5px; }
.roll { margin: 11px 0 0 14px; width: 226px; height: 8px; background: #c0c0c0; }
.splitter { height: 5px; margin-left: 8px; background: #cfdbe4; }
.parts { height: 152px; margin-top: 5px; border-right: 8px solid #f1f5f9; width: 254px; }
.row.pr { height: 28px; padding-left: 13px; font-size: 16px; }
.row.pr .ch { margin-right: 5px; width: 14px; }
.pt { padding: 4px 0 0 36px; font-size: 16px; }

/* model view */
.stage { position: relative; flex: 1; }
.scene { width: 1662px; height: 747px; overflow: hidden; }
.pl { font: 500 20px Inter, sans-serif; fill: #3f70c9; }
.face { font: 700 38px "Noto Sans CJK TC", sans-serif; fill: #333; }
.ax { font: 500 48px Roboto, sans-serif; }
.ax .ay { font-size: 42px; font-weight: 400; }
.side { position: absolute; right: -1px; top: 328px; width: 42px; height: 43px; background: #fff; border: 1px solid #bbb; }
.side svg { width: 25px; height: 25px; margin-left: 7px; }

/* document tabs */
.dtabs { height: 37px; flex: none; display: flex; align-items: flex-start; background: #ccc; border-bottom: 1px solid #aaa; }
.lead { width: 89px; height: 36px; display: flex; align-items: center; padding-left: 11px; flex: none; }
.find { width: 21px; height: 21px; }
.add { width: 19px; height: 19px; margin-left: 26px; }
.dt { width: 97px; height: 34px; margin-right: 2.500px; background: #e8e8e8; border-radius: 0 0 5px 5px; box-shadow: 0 1px 2px rgba(0,0,0,.25); display: flex; align-items: center; padding-left: 12px; font: 16.500px Roboto, "Open Sans", sans-serif; letter-spacing: .5px; color: #666; white-space: nowrap; flex: none; }
.dt svg { width: 24px; height: 24px; margin-right: 5px; }
.t0 { width: 23px; padding-left: 2px; background: linear-gradient(90deg, #bdbdbd, #e8e8e8); border-radius: 0 0 5px 0; margin-right: 3px; }
.cur { background: #fff; color: #333; border-bottom: 2px solid #1b5faa; height: 35px; }
.w106 { width: 105.500px; } .w98 { width: 98px; } .w102 { width: 102px; } .w118 { width: 117.500px; } .w180 { width: 180px; } .w100 { width: 99.500px; } .w108 { width: 107.500px; } .w122 { width: 122.500px; } .w78 { width: 78px; } .w178 { width: 178px; }
.last { width: 33px; margin: 0; overflow: hidden; border-radius: 0; }
.tail { width: 60px; height: 36px; margin-left: auto; background: #ccc; flex: none; position: relative; }

/* downloads */
.dl { height: 59px; flex: none; display: flex; align-items: center; padding-left: 28px; }
.pdf { width: 14px; height: 19px; margin-top: -3px; }
.pt4 { font: 6.500px "Open Sans", sans-serif; fill: #555; }
.dl span { width: 192px; margin: 6px 0 0 19px; font-size: 17px; letter-spacing: -.2px; color: #444; }
.up { width: 12px; height: 8px; transform: scaleY(-1); color: #666; margin-top: -3px; }
.dl i { width: 1px; height: 45px; background: #ccc; margin-left: 22px; }
.dl button { width: 100px; height: 40px; margin-left: auto; border: 1px solid #888; border-radius: 4px; background: #fff; font-size: 15px; font-weight: 300; color: #333; margin-top: -1px; }
.cl { width: 12px; height: 12px; color: #666; margin: 0 16px 0 17px; }

/* taskbar */
.task { height: 50px; flex: none; background: #0e1e25; display: flex; }
.ti { width: 61.900px; height: 50px; display: flex; align-items: center; justify-content: center; position: relative; flex: none; right: .5px; }
.ti svg { width: 20px; height: 20px; }
.ti .s28 { width: 28px; height: 28px; }
.ti .s30 { width: 30px; height: 30px; }
.w60 { width: 60px; }
.w64 { width: 63.500px; padding-right: 3px; }
.act { background: #3f4c52; border-bottom: 3px solid #76b9ed; padding-right: 1px; }
.act svg { margin-top: 2px; }
.run::after { content: ""; position: absolute; left: 5px; right: 5px; bottom: 0; height: 3px; background: #76b9ed; }
.two::after { background: linear-gradient(90deg, #76b9ed 79%, #5587b5 79%); }
.ln { font: 700 7px "Open Sans", sans-serif; fill: #00b900; }
.tray { margin-left: auto; display: flex; align-items: center; color: #fff; }
.ppl { width: 19px; height: 21px; }
.tup { width: 17px; height: 10px; transform: scaleY(-1); margin-left: 28px; }
.bat { width: 20px; height: 14px; margin-left: 11px; }
.vol { width: 20px; height: 17px; margin-left: 10px; }
.mon { width: 20px; height: 17px; margin-left: 10px; }
.xc { width: 18px; height: 18px; margin-left: 10px; }
.clock { width: 84px; margin-left: 7px; display: flex; flex-direction: column; text-align: center; font-size: 15.300px; line-height: 23px; letter-spacing: -.1px; white-space: nowrap; }
.note { width: 32px; height: 32px; margin-left: 21px; margin-top: 6px; }
.nb { font: 14px "Open Sans", sans-serif; fill: #fff; }
.tray i { width: 1px; height: 50px; background: #56626a; margin: 0 5px 0 13px; }
```
